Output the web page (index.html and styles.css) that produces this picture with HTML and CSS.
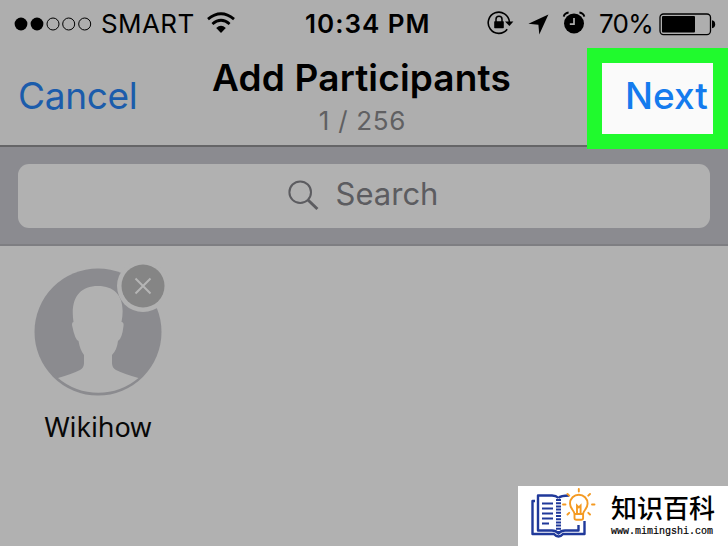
FILE: index.html
```html
<!DOCTYPE html>
<html lang="en">
<head>
<meta charset="utf-8">
<title>Add Participants</title>
<link rel="stylesheet" href="styles.css">
</head>
<body>
<main class="screen">
  <header class="top">
    <div class="status">
      <div class="carrier">
        <svg class="signal" width="78" height="16" viewBox="0 0 78 16">
          <circle cx="7" cy="8" r="6.4"/><circle cx="23" cy="8" r="6.4"/>
          <g fill="none" stroke="#000" stroke-width="1"><circle cx="39" cy="8" r="6"/><circle cx="54.7" cy="8" r="6"/><circle cx="70.7" cy="8" r="6"/></g>
        </svg>
        <span class="network">SMART</span>
        <svg class="wifi" width="28" height="22" viewBox="0 0 28 22">
          <g fill="none" stroke="#000" stroke-width="2.8"><path d="M1 7.2Q14-3.6 27 7.2"/><path d="M5.400 12Q14 4.600 22.600 12"/></g>
          <path d="M9.200 16Q14 11.300 18.800 16L14 21z"/>
        </svg>
      </div>
      <span class="time">10:34 PM</span>
      <div class="indicators">
        <svg class="lock" width="28" height="24" viewBox="0 0 28 24">
          <path d="M20.2 18.3A10.6 10.6 0 1 1 22.4 11" fill="none" stroke="#000" stroke-width="1.6"/>
          <path d="M18 10.600h8.400l-4 4.500z"/>
          <rect x="7.2" y="10.2" width="9.6" height="7" rx=".6"/>
          <path d="M9 11V8.200a3 3 0 0 1 6 0V11" fill="none" stroke="#000" stroke-width="1.5"/>
        </svg>
        <svg class="arrow" width="21" height="21" viewBox="0 0 21 21"><path d="M20.400.4 11.300 20.400 10.400 10.700.4 9.800z"/></svg>
        <svg class="alarm" width="24" height="24" viewBox="0 0 24 24">
          <circle cx="12" cy="12.5" r="10"/>
          <path d="M12 7v6.200H7.800" fill="none" stroke="#aeaeae" stroke-width="1.7"/>
          <path d="M1.600 5.600Q2.800 2 6.600 1.500M22.400 5.600Q21.200 2 17.400 1.500" fill="none" stroke="#000" stroke-width="1.8"/>
        </svg>
        <span class="percent">70%</span>
        <svg class="battery" width="57" height="23" viewBox="0 0 57 23">
          <rect x="1" y="1" width="50.5" height="20.6" rx="3.5" fill="none" stroke="#000" stroke-width="1.3"/>
          <rect x="3" y="3" width="33" height="16.6" rx="1"/>
          <path d="M53 7.300q3.200.7 3.200 4t-3.200 4z"/>
        </svg>
      </div>
    </div>
    <nav class="nav">
      <a class="cancel"><span>Cancel</span></a>
      <div class="heading">
        <h1><span>Add Participants</span></h1>
        <p><span>1 / 256</span></p>
      </div>
      <a class="next"><span>Next</span></a>
    </nav>
  </header>
  <section class="search">
    <div class="field">
      <svg width="31" height="31" viewBox="0 0 31 31" fill="none" stroke="#5c5c60"><circle cx="12.2" cy="12.2" r="10.8" stroke-width="2"/><path d="m20 20 9.400 9" stroke-width="3"/></svg>
      <span>Search</span>
    </div>
  </section>
  <section class="people">
    <div class="person">
      <div class="avatar">
        <svg width="128" height="128" viewBox="0 0 128 128">
          <circle cx="64" cy="64" r="63.5" fill="#8b8b8f"/>
          <path d="M24 110Q38 106 46 102Q50 100 50 95V87Q46 82 44.500 73Q41 72 38 57Q38 54 39.500 54C36 31 45 18 64 18S92 31 87.500 54Q90 54 89.500 58Q88 71 84 73Q83 82 78 87V95Q78 100 82 102Q90 106 104.500 110A62 62 0 0 1 24 110" fill="#b1b1b1"/>
        </svg>
        <svg class="remove" width="52" height="52" viewBox="0 0 52 52"><circle cx="26" cy="26" r="26" fill="#b1b1b1"/><circle cx="26" cy="26" r="21.5" fill="#858585"/><path d="m18.500 18.500 15 15m0-15-15 15" stroke="#b5b5b5" stroke-width="2"/></svg>
      </div>
      <span class="name">Wikihow</span>
    </div>
  </section>
  <aside class="brand">
    <svg width="64" height="52" viewBox="0 0 64 52" fill="none">
      <g stroke="#20399a" stroke-width="2.4" stroke-linejoin="round">
        <path d="M5 10H2.500v33H24q2 2.500 4.500 2.500T33 43h21.500V30"/>
        <path d="M28.500 7Q26 4.500 22 4.500H8V39.500h14q4 0 6.500 3q2.500-3 6.500-3H48.500V34M28.500 7Q31 4.500 39 4.500"/>
        <path d="M12 12.500H23M12 17.500H23M12 22.500H23M12 27.500H23M12 32.500H19" stroke-width="2"/>
      </g>
      <path d="M28.500 8v34" stroke="#20399a" stroke-width="5" stroke-dasharray="2 1.2"/>
      <g stroke="#f49a22" stroke-width="1.9" stroke-linecap="round">
        <path d="M44.500 23c0-3.500-4.500-5-4.500-10.500a8.800 8.800 0 0 1 17.600 0c0 5.500-4.500 7-4.500 10.500zM44.500 23v4q0 1.800 2 1.800h4.600q2 0 2-1.800v-4M47 22v-7.500l1.800 1.800 1.800-1.800V22"/>
        <path d="M48.800 0.500V-2M37.500 3l1.700 1.700M60 3l-1.700 1.700M33 13.500h2.500M62 13.500h2.500M37.500 23.500l1.700-1.700M60 23.500l-1.700-1.700"/>
      </g>
    </svg>
    <div class="brand-text"><strong>知识百科</strong><small>www.mimingshi.com</small></div>
  </aside>
</main>
</body>
</html>
```
FILE: styles.css
```css
* { box-sizing: border-box; }
body { margin: 0; font-family: Inter, "Liberation Sans", sans-serif; }
svg { display: block; flex: none; }
span { white-space: nowrap; }
.screen { width: 728px; height: 546px; overflow: hidden; position: relative; background: #b1b1b1; display: flex; flex-direction: column; }
.top { height: 147px; background: #aeaeae; border-bottom: 2px solid #656567; position: relative; z-index: 1; }
.status { height: 48px; display: grid; grid-template-columns: 305px 182px 1fr; font-size: 26px; line-height: 48px; }
.carrier, .indicators { display: flex; align-items: center; }
.signal { margin-left: 14px; }
.network { width: 106px; margin-left: 9px; letter-spacing: .4px; }
.wifi { margin-top: -2px; }
.time { font-weight: 600; letter-spacing: 1px; }
.lock { margin-top: -2px; }
.arrow { margin-left: 13px; }
.alarm { margin-left: 13px; margin-top: -2px; }
.percent { width: 60px; margin-left: 13px; letter-spacing: -.7px; }
.nav { height: 98px; display: grid; grid-template-columns: 136px 451px 141px; }
.cancel { padding-left: 18px; color: #1b5cab; font-size: 37px; line-height: 96px; letter-spacing: -.3px; }
.heading { text-align: center; }
h1 { margin: 6px 0 0; font-size: 37px; line-height: 48px; font-weight: 600; letter-spacing: .15px; }
p { margin: 0 0 0 2px; color: #606062; font-size: 26px; line-height: 37px; letter-spacing: .7px; }
.next { height: 101px; border: 15px solid #20fa2d; background: #fafafa; color: #147bee; font-size: 37px; font-weight: 500; line-height: 66px; padding-left: 23px; }
.search { height: 99px; background: #8b8b90; border-bottom: 2px solid #7e7e82; padding: 17px 18px 0; }
.field { height: 64px; border-radius: 11px; background: #b1b1b1; display: flex; align-items: center; justify-content: center; gap: 17px; color: #5c5c60; font-size: 31px; line-height: 38px; padding: 0 2px 1px 0; }
.field span { margin-top: -3px; }
.people { padding: 22px 33px; }
.person { width: 130px; display: flex; flex-direction: column; align-items: center; }
.avatar { position: relative; }
.remove { position: absolute; left: 83px; top: -8px; }
.name { font: 27px/36px "Noto Sans", sans-serif; margin-top: 13px; color: #080808; }
.brand { position: absolute; right: 0; bottom: 0; width: 210px; height: 60px; background: #fff; padding: 5px 0 0 12px; display: flex; gap: 17px; }
.brand svg { overflow: visible; }
.brand-text { display: flex; flex-direction: column; color: #000; white-space: nowrap; }
.brand strong { font: 500 26px/32px "Noto Sans CJK SC", sans-serif; }
.brand small { font: 10px/14px "Liberation Mono", monospace; margin-top: 2px; -webkit-text-stroke: .2px #000; }
```
